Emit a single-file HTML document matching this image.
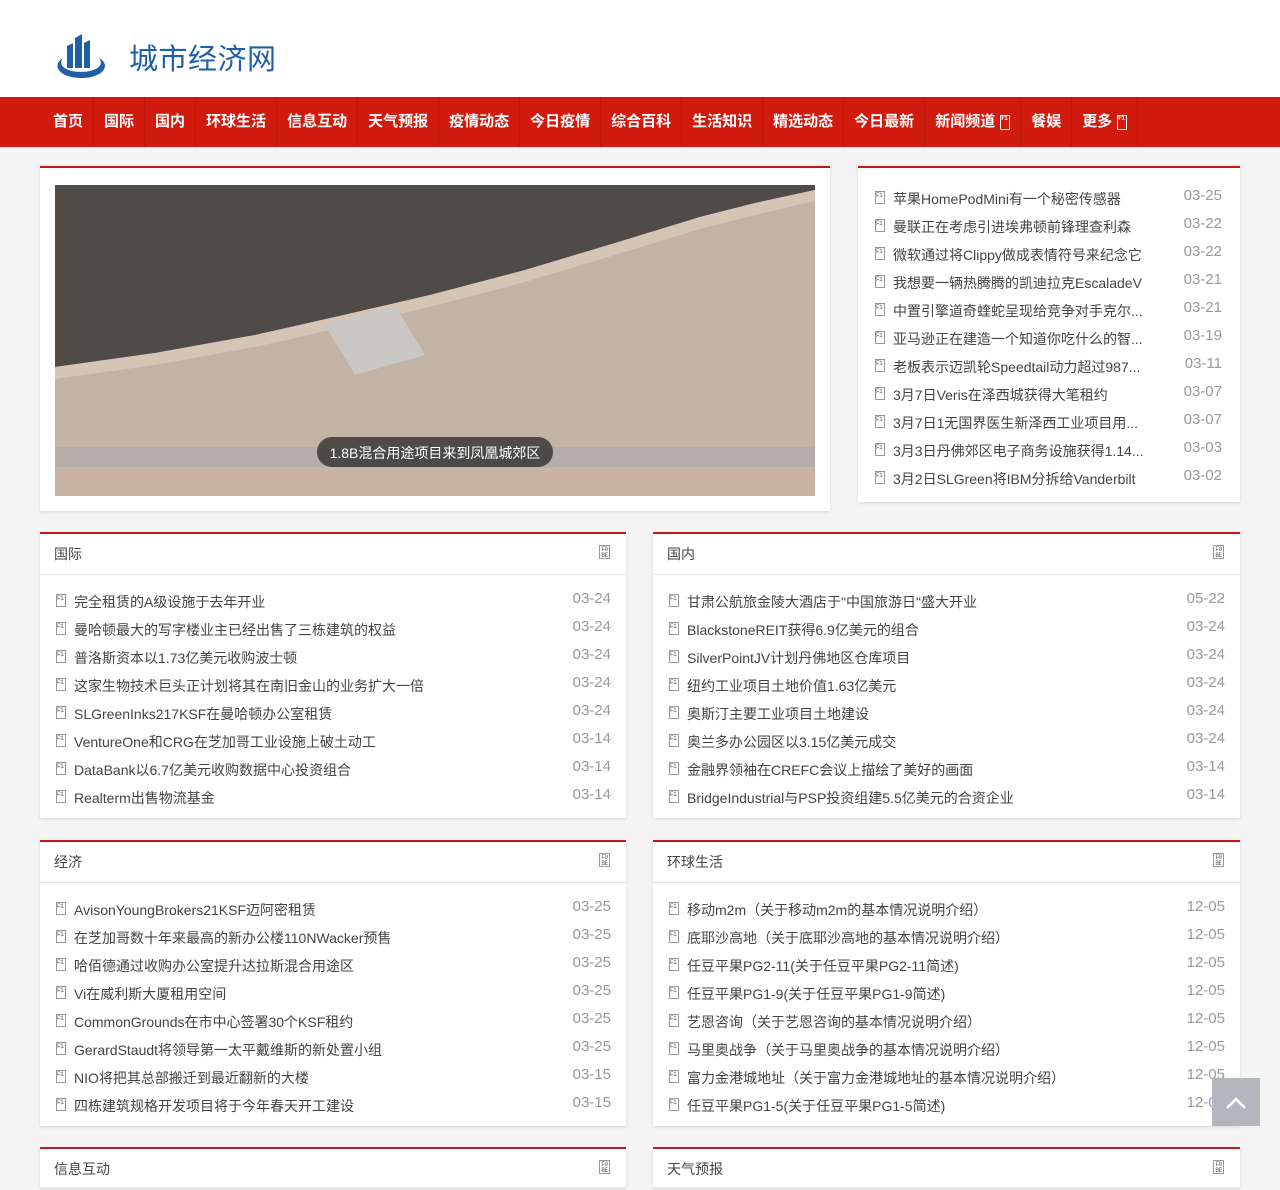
<!DOCTYPE html>
<html><head><meta charset="utf-8">
<style>
*{margin:0;padding:0;box-sizing:border-box}
body{width:1280px;height:1167px;overflow:hidden;background:#f4f4f4;font-family:"Liberation Sans","Noto Sans CJK SC",sans-serif;color:#333}
.hd{height:97px;background:#fff;position:relative}
.logo{position:absolute;left:54px;top:30px}
.brand{position:absolute;left:129px;top:36px;font-size:29px;color:#1f5fa8;letter-spacing:0.5px}
.nav{height:50px;background:#d11b0f;display:flex;padding-left:43px}
.nav a{color:#fff;font-weight:bold;font-size:15px;line-height:50px;padding:0 10px;border-right:1px solid #c0150b;text-decoration:none;white-space:nowrap;display:flex;align-items:center}
.ic{display:inline-block;width:10px;height:13px;border:1px solid #999;font-size:6px;line-height:5.5px;text-align:center;font-family:"Liberation Mono",monospace;color:#555;vertical-align:middle;overflow:hidden;letter-spacing:-0.5px;padding-top:0.5px}
.nav .ic{border-color:#fff;color:#fff;margin-left:5px;height:15px;width:10px;line-height:6.5px}
.box{position:absolute;background:#fff;border-top:2px solid #c01a1a;box-shadow:0 1px 3px rgba(0,0,0,.12)}
.li{position:absolute;left:0;right:0;height:28px;font-size:14px;color:#444;white-space:nowrap}
.li .ic{position:absolute;left:0;top:2px}
.li .t{position:absolute;left:18px;top:0}
.li .d{position:absolute;right:0;top:-2px;color:#999;font-size:15px}
.sh{height:41px;border-bottom:1px solid #e5e5e5;font-size:14px;line-height:41px;padding-left:14px;color:#444;position:relative}
.sh .ic{position:absolute;right:16px;top:11px;height:14px;width:11px;line-height:6.5px}
.top{position:absolute;left:1212px;top:1078px;width:48px;height:48px;background:#b3b6bd}
</style></head><body>
<div class="hd">
<svg class="logo" width="56" height="52" viewBox="0 0 56 52">
<path d="M13 16 L19 13 L19 38 L13 38Z" fill="#1f5fa8"/>
<path d="M21 8 L28 4 L28 38 L21 38Z" fill="#1f5fa8"/>
<path d="M30 13 L36 10 L36 38 L30 38Z" fill="#1f5fa8"/>
<path d="M9 28 C-3 35 5 48 27 48 C49 48 58 35 45 28 C51 35 42 42 27 42 C12 42 3 35 9 28Z" fill="#1f5fa8"/>
</svg>
<div class="brand">城市经济网</div>
</div>
<div class="nav">
<a>首页</a><a>国际</a><a>国内</a><a>环球生活</a><a>信息互动</a><a>天气预报</a><a>疫情动态</a><a>今日疫情</a><a>综合百科</a><a>生活知识</a><a>精选动态</a><a>今日最新</a><a>新闻频道<span class="ic">F1 07</span></a><a>餐娱</a><a>更多<span class="ic">F1 07</span></a>
</div>

<div class="box" style="left:40px;top:166px;width:790px;height:345px">
<svg style="position:absolute;left:15px;top:17px" width="760" height="311" viewBox="0 0 760 311">
<rect width="760" height="311" fill="#c2b3a4"/>
<path d="M0 0 L760 0 L760 5 L700 18 L645 32 L560 58 L470 85 L375 110 L280 132 L200 150 L100 168 L0 182Z" fill="#4f4c47"/>
<path d="M0 182 L100 168 L200 150 L280 132 L375 110 L470 85 L560 58 L645 32 L700 18 L760 5 L760 16 L700 30 L645 44 L560 70 L470 97 L375 122 L280 144 L200 162 L100 180 L0 194Z" fill="#d6c5b4"/>
<path d="M270 140 L340 120 L370 170 L300 190Z" fill="#c9c8c4"/>
<rect x="0" y="262" width="760" height="20" fill="#b3aeaa"/>
<rect x="0" y="282" width="760" height="29" fill="#c9b4a4"/>
<rect x="262" y="252" width="236" height="30" rx="15" fill="rgba(40,40,40,.75)"/>
<text x="380" y="273" text-anchor="middle" fill="#fff" font-size="14" font-family="Liberation Sans,Noto Sans CJK SC,sans-serif">1.8B混合用途项目来到凤凰城郊区</text>
</svg>
</div>

<div class="box" style="left:858px;top:166px;width:382px;height:336px" id="r"></div>

<div class="box" style="left:40px;top:532px;width:586px;height:286px" id="b1"></div>
<div class="box" style="left:653px;top:532px;width:587px;height:286px" id="b2"></div>
<div class="box" style="left:40px;top:840px;width:586px;height:286px" id="b3"></div>
<div class="box" style="left:653px;top:840px;width:587px;height:286px" id="b4"></div>
<div class="box" style="left:40px;top:1147px;width:586px;height:40px"><div class="sh">信息互动<span class="ic">F0 BE</span></div></div>
<div class="box" style="left:653px;top:1147px;width:587px;height:40px"><div class="sh">天气预报<span class="ic">F0 BE</span></div></div>
<div class="top"><svg width="48" height="48"><path d="M15 30 L24 21 L33 30" stroke="#fff" stroke-width="2.5" fill="none"/></svg></div>

<script>
function L(items,top){let h='';items.forEach((it,i)=>{h+='<div class="li" style="top:'+(top+i*28)+'px"><span class="ic">F1 05</span><span class="t">'+it[0]+'</span><span class="d">'+it[1]+'</span></div>'});return h}
document.getElementById('r').innerHTML='<div style="position:absolute;left:17px;right:18px;top:0">'+L([["苹果HomePodMini有一个秘密传感器","03-25"],["曼联正在考虑引进埃弗顿前锋理查利森","03-22"],["微软通过将Clippy做成表情符号来纪念它","03-22"],["我想要一辆热腾腾的凯迪拉克EscaladeV","03-21"],["中置引擎道奇蝰蛇呈现给竞争对手克尔...","03-21"],["亚马逊正在建造一个知道你吃什么的智...","03-19"],["老板表示迈凯轮Speedtail动力超过987...","03-11"],["3月7日Veris在泽西城获得大笔租约","03-07"],["3月7日1无国界医生新泽西工业项目用...","03-07"],["3月3日丹佛郊区电子商务设施获得1.14...","03-03"],["3月2日SLGreen将IBM分拆给Vanderbilt","03-02"]],21)+'</div>';
function S(id,title,items){document.getElementById(id).innerHTML='<div class="sh">'+title+'<span class="ic">F0 BE</span></div><div style="position:absolute;left:16px;right:15px;top:0">'+L(items,58)+'</div>'}
S('b1','国际',[["完全租赁的A级设施于去年开业","03-24"],["曼哈顿最大的写字楼业主已经出售了三栋建筑的权益","03-24"],["普洛斯资本以1.73亿美元收购波士顿","03-24"],["这家生物技术巨头正计划将其在南旧金山的业务扩大一倍","03-24"],["SLGreenInks217KSF在曼哈顿办公室租赁","03-24"],["VentureOne和CRG在芝加哥工业设施上破土动工","03-14"],["DataBank以6.7亿美元收购数据中心投资组合","03-14"],["Realterm出售物流基金","03-14"]]);
S('b2','国内',[["甘肃公航旅金陵大酒店于\"中国旅游日\"盛大开业","05-22"],["BlackstoneREIT获得6.9亿美元的组合","03-24"],["SilverPointJV计划丹佛地区仓库项目","03-24"],["纽约工业项目土地价值1.63亿美元","03-24"],["奥斯汀主要工业项目土地建设","03-24"],["奥兰多办公园区以3.15亿美元成交","03-24"],["金融界领袖在CREFC会议上描绘了美好的画面","03-14"],["BridgeIndustrial与PSP投资组建5.5亿美元的合资企业","03-14"]]);
S('b3','经济',[["AvisonYoungBrokers21KSF迈阿密租赁","03-25"],["在芝加哥数十年来最高的新办公楼110NWacker预售","03-25"],["哈佰德通过收购办公室提升达拉斯混合用途区","03-25"],["Vi在威利斯大厦租用空间","03-25"],["CommonGrounds在市中心签署30个KSF租约","03-25"],["GerardStaudt将领导第一太平戴维斯的新处置小组","03-25"],["NIO将把其总部搬迁到最近翻新的大楼","03-15"],["四栋建筑规格开发项目将于今年春天开工建设","03-15"]]);
S('b4','环球生活',[["移动m2m（关于移动m2m的基本情况说明介绍）","12-05"],["底耶沙高地（关于底耶沙高地的基本情况说明介绍）","12-05"],["任豆平果PG2-11(关于任豆平果PG2-11简述)","12-05"],["任豆平果PG1-9(关于任豆平果PG1-9简述)","12-05"],["艺恩咨询（关于艺恩咨询的基本情况说明介绍）","12-05"],["马里奥战争（关于马里奥战争的基本情况说明介绍）","12-05"],["富力金港城地址（关于富力金港城地址的基本情况说明介绍）","12-05"],["任豆平果PG1-5(关于任豆平果PG1-5简述)","12-05"]]);
</script>
</body></html>
